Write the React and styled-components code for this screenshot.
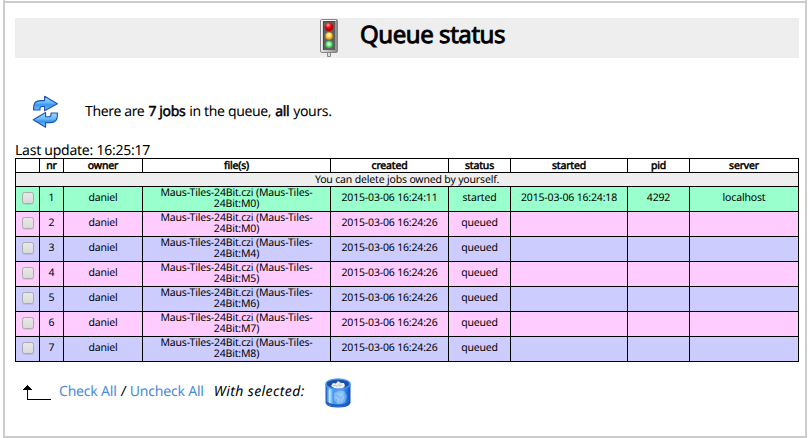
import React from "react";
import styled, { createGlobalStyle, css } from "styled-components";

const Global = createGlobalStyle`
  *, *::before, *::after { box-sizing: border-box; }
  body {
    margin: 0;
    background: #fff;
    overflow: hidden;
  }
`;

const heavy = css`
  font-weight: 400;
  -webkit-text-stroke: ${(p) => p.$stroke || "0.5px"} #000;
`;

const Page = styled.main`
  width: 804px;
  height: 438px;
  margin-left: 3px;
  padding-top: 1px;
  border: solid #ccc;
  border-width: 0 2px 2px;
  background: #fff;
  color: #000;
  font: 14px/18px "Noto Sans", "Open Sans", sans-serif;
  letter-spacing: -0.25px;
  text-rendering: geometricPrecision;
`;

const Content = styled.div`
  border-top: 2px solid #ccc;
  padding: 15px 6px 0 10px;
`;

const Header = styled.header`
  display: flex;
  align-items: flex-start;
  height: 40px;
  padding: 1px 0 0 305px;
  gap: 22px;
  background: #eee;
`;

const Title = styled.h1`
  ${heavy}
  margin: 0;
  font-size: 24px;
  line-height: 32px;
  letter-spacing: -0.44px;
  white-space: nowrap;
`;

const Summary = styled.section`
  display: flex;
  align-items: center;
  gap: 26px;
  height: 33px;
  margin-top: 37px;
  padding-left: 17px;
`;

const Phrase = styled.p`
  display: flex;
  gap: 4px;
  margin: 0;
  padding-top: 1px;
  letter-spacing: -0.36px;
  white-space: nowrap;
`;

const Strong = styled.b`
  ${heavy}
`;

const Updated = styled.p`
  margin: 14px 0 0;
  height: 16px;
`;

const Table = styled.table`
  width: 784px;
  table-layout: fixed;
  border-spacing: 0;
  border: solid #000;
  border-width: 0 1px 1px 0;
  font-size: 10.5px;
  line-height: 11px;
  letter-spacing: -0.17px;
  text-align: center;
`;

const Col = styled.col`
  width: ${(p) => p.$w}px;
`;

const HeadCell = styled.th`
  ${heavy}
  height: 14px;
  padding: 1px 0 0;
  border: solid #000;
  border-width: 1px 0 0 1px;
`;

const NoticeCell = styled.td`
  height: 14px;
  padding: 1px 0 0;
  border: solid #000;
  border-width: 1px 0 0 1px;
  background: #eee;
`;

const rowColor = { active: "#9fc", odd: "#fcf", even: "#ccf" };

const JobRow = styled.tr`
  background: ${(p) => rowColor[p.$tone]};
`;

const Cell = styled.td`
  height: 25px;
  padding: 0 0 1px;
  border: solid #000;
  border-width: 1px 0 0 1px;
  vertical-align: middle;
`;

const FileName = styled.span`
  display: block;
  height: 11px;
`;

const CheckCell = styled(Cell)`
  padding: 0 0 2px 1px;
`;

const Check = styled.input.attrs({ type: "checkbox" })`
  appearance: none;
  display: block;
  width: 12px;
  height: 12px;
  margin: 0 auto;
  border: 1px solid #aaa;
  border-radius: 2.5px;
  background: linear-gradient(#e8e8e8, #dadada);
  box-shadow: 0 1px 0 rgba(0, 0, 0, 0.08);
`;

const Actions = styled.footer`
  display: flex;
  align-items: center;
  height: 30px;
  margin-top: 16px;
  padding-left: 8px;
  white-space: nowrap;
`;

const Links = styled.div`
  display: flex;
  gap: 3px;
  margin: 0 10px 0 8px;
  padding-bottom: 3px;
`;

const Link = styled.a`
  color: #4a8ae0;
  letter-spacing: -0.19px;
`;

const Slash = styled.span`
  width: 7px;
  text-align: center;
  transform: skewX(-6deg);
`;

const Selected = styled.em`
  width: 111px;
  padding-bottom: 3px;
  letter-spacing: 0.4px;
`;

const Icon = styled.svg`
  display: block;
  flex: none;
`;

function TrafficLight() {
  return (
    <Icon width="18" height="38" viewBox="0 0 18 38">
      <defs>
        <linearGradient id="case" x2="1">
          <stop stopColor="#e8e8e8" />
          <stop offset=".5" stopColor="#bbb" />
          <stop offset="1" stopColor="#888" />
        </linearGradient>
        <radialGradient id="red" cx=".4" cy=".3">
          <stop stopColor="#ffb0a8" />
          <stop offset=".5" stopColor="#ee2020" />
          <stop offset="1" stopColor="#b80000" />
        </radialGradient>
        <radialGradient id="amber" cx=".5" cy=".4">
          <stop stopColor="#fffde0" />
          <stop offset=".55" stopColor="#ffd84a" />
          <stop offset="1" stopColor="#e09818" />
        </radialGradient>
        <radialGradient id="green" cx=".5" cy=".45">
          <stop stopColor="#f0fff0" />
          <stop offset=".5" stopColor="#7df08c" />
          <stop offset="1" stopColor="#22b844" />
        </radialGradient>
      </defs>
      <path d="M7.5 33h3v4.5h-3z" fill="#ddd" stroke="#888" />
      <rect x=".5" y=".5" width="17" height="33" rx="1.5" fill="url(#case)" stroke="#858585" />
      <path d="M1.5 32V1.5H16" fill="none" stroke="#f4f4f4" />
      <path d="M3 2h12v29H3z" fill="#606060" />
      <path d="M3.5 31V2.5H15" fill="none" stroke="#484848" />
      <circle cx="9" cy="7.8" r="4.4" fill="url(#red)" />
      <circle cx="9" cy="17" r="3.8" fill="url(#amber)" />
      <circle cx="9" cy="25.5" r="3.8" fill="url(#green)" />
    </Icon>
  );
}

function Refresh() {
  return (
    <Icon width="27" height="33" viewBox="0 0 27 33">
      <defs>
        <linearGradient id="blue" x2="0" y2="1">
          <stop stopColor="#a8dcff" />
          <stop offset=".45" stopColor="#62b8fc" />
          <stop offset=".6" stopColor="#3896f0" />
          <stop offset="1" stopColor="#78ccff" />
        </linearGradient>
      </defs>
      <g fill="url(#blue)" stroke="#2452ac" strokeWidth="1.1" strokeLinejoin="round">
        <path d="M1.6 15V12.5Q1.6 5.6 8.6 5.6H12.6V1.200L25.400 8.700 12.600 15.800V11.500H10Q8 11.500 8 13.500V15Z" />
        <path d="M25.400 18V20.500Q25.400 27.600 18.400 27.600H13.600V32.200L1.200 24.700 13.600 17.600V21.700H17Q19 21.700 19 19.700V18Z" />
      </g>
    </Icon>
  );
}

function ReturnArrow() {
  return (
    <Icon width="28" height="16" viewBox="0 0 28 16" shapeRendering="crispEdges">
      <path d="M4 0h1v1h1v1h1v1h1v1h1v1H5v9h23v1H4V5H0V4h1V3h1V2h1V1h1z" />
    </Icon>
  );
}

function Trash() {
  return (
    <Icon width="26" height="30" viewBox="0 0 26 30">
      <defs>
        <linearGradient id="bin" x2="1">
          <stop stopColor="#2470d8" />
          <stop offset=".18" stopColor="#a4d8ff" />
          <stop offset=".3" stopColor="#4498f0" />
          <stop offset=".65" stopColor="#64acf0" />
          <stop offset=".85" stopColor="#2878e0" />
          <stop offset="1" stopColor="#1550b8" />
        </linearGradient>
      </defs>
      <path d="M1 6v19q1 4 12 4t12-4V6z" fill="url(#bin)" stroke="#1a56bc" />
      <path d="M2 24.500q3 3 11 3t11-3" fill="none" stroke="#1c5cc8" strokeWidth="2" />
      <ellipse cx="13" cy="6" rx="12" ry="5" fill="#1b4ea8" stroke="#4a98f0" strokeWidth="1.4" />
      <path d="M6 8l2-3 3 .5L13 3l3 2 3 0 1 3-2 2-5 .5-4-.5z" fill="#eee" />
      <path d="M8 8l2-1 2 1.500 3-3M14 8l3-1" fill="none" stroke="#b5b5b5" strokeWidth=".8" />
      <path d="M9 15l5-2 5 0 3 5-2 6-7 2-4-4z" fill="#c8e6ff" opacity=".38" />
      <path d="M12 15l3 2 4-2M10 19l4 2-1 3M17 17l2 3-3 3" fill="none" stroke="#e4f4ff" strokeWidth="1" opacity=".4" />
      <path d="M4.500 12v13" stroke="#d8f0ff" strokeWidth="1.300" opacity=".8" />
    </Icon>
  );
}

const columns = [
  ["", 24], ["nr", 24], ["owner", 79], ["file(s)", 188], ["created", 118],
  ["status", 62], ["started", 117], ["pid", 62], ["server", 109],
];

const jobs = ["M0", "M0", "M4", "M5", "M6", "M7", "M8"].map((part, i) => ({
  nr: i + 1,
  part,
  tone: i === 0 ? "active" : i % 2 ? "odd" : "even",
  created: i === 0 ? "2015-03-06 16:24:11" : "2015-03-06 16:24:26",
  status: i === 0 ? "started" : "queued",
  started: i === 0 ? "2015-03-06 16:24:18" : "",
  pid: i === 0 ? "4292" : "",
  server: i === 0 ? "localhost" : "",
}));

export default function App() {
  return (
    <>
      <Global />
      <Page>
        <Content>
          <Header>
            <TrafficLight />
            <Title $stroke="0.9px">Queue status</Title>
          </Header>
          <Summary>
            <Refresh />
            <Phrase>
              <span>There are</span>
              <Strong>7 jobs</Strong>
              <span>in the queue,</span>
              <Strong>all</Strong>
              <span>yours.</span>
            </Phrase>
          </Summary>
          <Updated>Last update: 16:25:17</Updated>
          <Table>
            <colgroup>
              {columns.map(([name, w]) => <Col key={name} $w={w} />)}
            </colgroup>
            <thead>
              <tr>{columns.map(([name]) => <HeadCell key={name}>{name}</HeadCell>)}</tr>
            </thead>
            <tbody>
              <tr>
                <NoticeCell colSpan={9}>You can delete jobs owned by yourself.</NoticeCell>
              </tr>
              {jobs.map((job) => (
                <JobRow key={job.nr} $tone={job.tone}>
                  <CheckCell><Check /></CheckCell>
                  <Cell>{job.nr}</Cell>
                  <Cell>daniel</Cell>
                  <Cell>
                    <FileName>Maus-Tiles-24Bit.czi (Maus-Tiles-</FileName>
                    <FileName>24Bit:{job.part})</FileName>
                  </Cell>
                  <Cell>{job.created}</Cell>
                  <Cell>{job.status}</Cell>
                  <Cell>{job.started}</Cell>
                  <Cell>{job.pid}</Cell>
                  <Cell>{job.server}</Cell>
                </JobRow>
              ))}
            </tbody>
          </Table>
          <Actions>
            <ReturnArrow />
            <Links>
              <Link>Check All</Link>
              <Slash>/</Slash>
              <Link>Uncheck All</Link>
            </Links>
            <Selected>With selected:</Selected>
            <Trash />
          </Actions>
        </Content>
      </Page>
    </>
  );
}
